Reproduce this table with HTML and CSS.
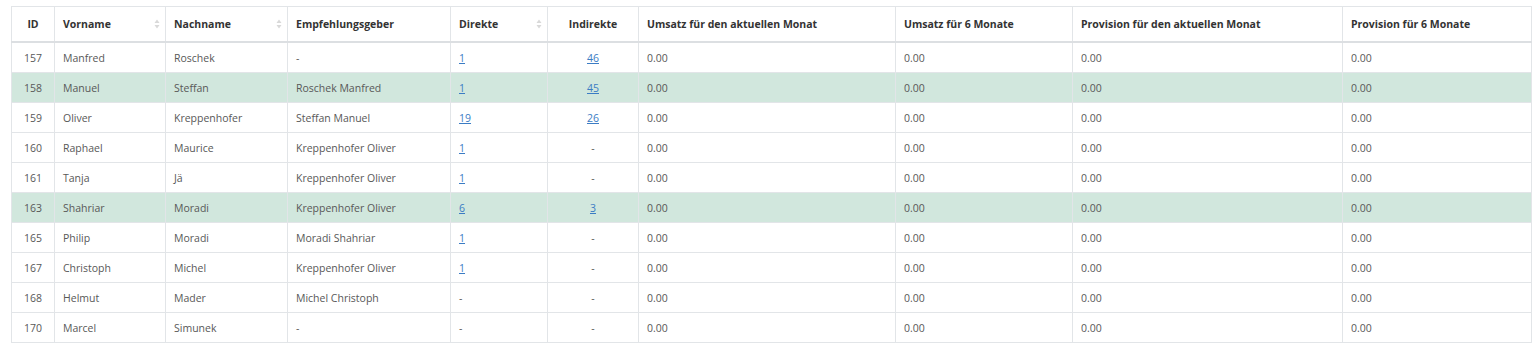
FILE: index.html
```html
<!DOCTYPE html>
<html lang="de">
<head>
<meta charset="utf-8">
<title>Empfehlungen</title>
<link rel="stylesheet" href="styles.css">
</head>
<body>
<div class="wrap">
<table class="tbl">
  <colgroup>
    <col class="c-id"><col class="c-vn"><col class="c-nn"><col class="c-eg"><col class="c-di">
    <col class="c-in"><col class="c-u1"><col class="c-u6"><col class="c-p1"><col class="c-p6">
  </colgroup>
  <thead>
    <tr>
      <th class="center">ID</th>
      <th><div class="sort"><span>Vorname</span><svg class="arr" viewBox="0 0 6 10" width="6" height="10"><path d="M3 0.5 L5.5 4 H0.5 Z"/><path d="M3 9.5 L5.5 6 H0.5 Z"/></svg></div></th>
      <th><div class="sort"><span>Nachname</span><svg class="arr" viewBox="0 0 6 10" width="6" height="10"><path d="M3 0.5 L5.5 4 H0.5 Z"/><path d="M3 9.5 L5.5 6 H0.5 Z"/></svg></div></th>
      <th>Empfehlungsgeber</th>
      <th><div class="sort"><span>Direkte</span><svg class="arr" viewBox="0 0 6 10" width="6" height="10"><path d="M3 0.5 L5.5 4 H0.5 Z"/><path d="M3 9.5 L5.5 6 H0.5 Z"/></svg></div></th>
      <th class="center">Indirekte</th>
      <th>Umsatz für den aktuellen Monat</th>
      <th>Umsatz für 6 Monate</th>
      <th>Provision für den aktuellen Monat</th>
      <th>Provision für 6 Monate</th>
    </tr>
  </thead>
  <tbody>
    <tr><td class="center">157</td><td>Manfred</td><td>Roschek</td><td>-</td><td><a href="#">1</a></td><td class="center"><a href="#">46</a></td><td>0.00</td><td>0.00</td><td>0.00</td><td>0.00</td></tr>
    <tr class="hl"><td class="center">158</td><td>Manuel</td><td>Steffan</td><td>Roschek Manfred</td><td><a href="#">1</a></td><td class="center"><a href="#">45</a></td><td>0.00</td><td>0.00</td><td>0.00</td><td>0.00</td></tr>
    <tr><td class="center">159</td><td>Oliver</td><td>Kreppenhofer</td><td>Steffan Manuel</td><td><a href="#">19</a></td><td class="center"><a href="#">26</a></td><td>0.00</td><td>0.00</td><td>0.00</td><td>0.00</td></tr>
    <tr><td class="center">160</td><td>Raphael</td><td>Maurice</td><td>Kreppenhofer Oliver</td><td><a href="#">1</a></td><td class="center">-</td><td>0.00</td><td>0.00</td><td>0.00</td><td>0.00</td></tr>
    <tr><td class="center">161</td><td>Tanja</td><td>Jä</td><td>Kreppenhofer Oliver</td><td><a href="#">1</a></td><td class="center">-</td><td>0.00</td><td>0.00</td><td>0.00</td><td>0.00</td></tr>
    <tr class="hl"><td class="center">163</td><td>Shahriar</td><td>Moradi</td><td>Kreppenhofer Oliver</td><td><a href="#">6</a></td><td class="center"><a href="#">3</a></td><td>0.00</td><td>0.00</td><td>0.00</td><td>0.00</td></tr>
    <tr><td class="center">165</td><td>Philip</td><td>Moradi</td><td>Moradi Shahriar</td><td><a href="#">1</a></td><td class="center">-</td><td>0.00</td><td>0.00</td><td>0.00</td><td>0.00</td></tr>
    <tr><td class="center">167</td><td>Christoph</td><td>Michel</td><td>Kreppenhofer Oliver</td><td><a href="#">1</a></td><td class="center">-</td><td>0.00</td><td>0.00</td><td>0.00</td><td>0.00</td></tr>
    <tr><td class="center">168</td><td>Helmut</td><td>Mader</td><td>Michel Christoph</td><td>-</td><td class="center">-</td><td>0.00</td><td>0.00</td><td>0.00</td><td>0.00</td></tr>
    <tr><td class="center">170</td><td>Marcel</td><td>Simunek</td><td>-</td><td>-</td><td class="center">-</td><td>0.00</td><td>0.00</td><td>0.00</td><td>0.00</td></tr>
  </tbody>
</table>
</div>
</body>
</html>
```

FILE: styles.css
```css
html, body {
  margin: 0;
  padding: 0;
  background: #ffffff;
}
body {
  font-family: "Open Sans", "Noto Sans", sans-serif;
  font-size: 10.5px;
  color: #585858;
}
.wrap {
  padding: 6px 5px 0 11px;
}
.tbl {
  width: 1520px;
  border-collapse: collapse;
  table-layout: fixed;
}
.c-id { width: 43px; }
.c-vn { width: 111px; }
.c-nn { width: 122px; }
.c-eg { width: 163px; }
.c-di { width: 97px; }
.c-in { width: 91px; }
.c-u1 { width: 257px; }
.c-u6 { width: 177px; }
.c-p1 { width: 270px; }
.c-p6 { width: 189px; }

.tbl th,
.tbl td {
  border: 1px solid #e2e5e8;
  padding: 0 8px;
  text-align: left;
  vertical-align: middle;
  white-space: nowrap;
  overflow: hidden;
}
.tbl th {
  height: 34px;
  font-weight: 700;
  color: #333;
  border-bottom: 2px solid #dcdfe2;
}
.tbl td {
  height: 29px;
}
.tbl .center { text-align: center; }
.tbl tr.hl td { background: #d1e7dd; }

.sort {
  display: flex;
  align-items: center;
  justify-content: space-between;
  margin-right: -3px;
}
.arr { fill: #d9d9d9; flex: none; }

a {
  color: #3b7cc4;
  text-decoration: underline;
}
```
